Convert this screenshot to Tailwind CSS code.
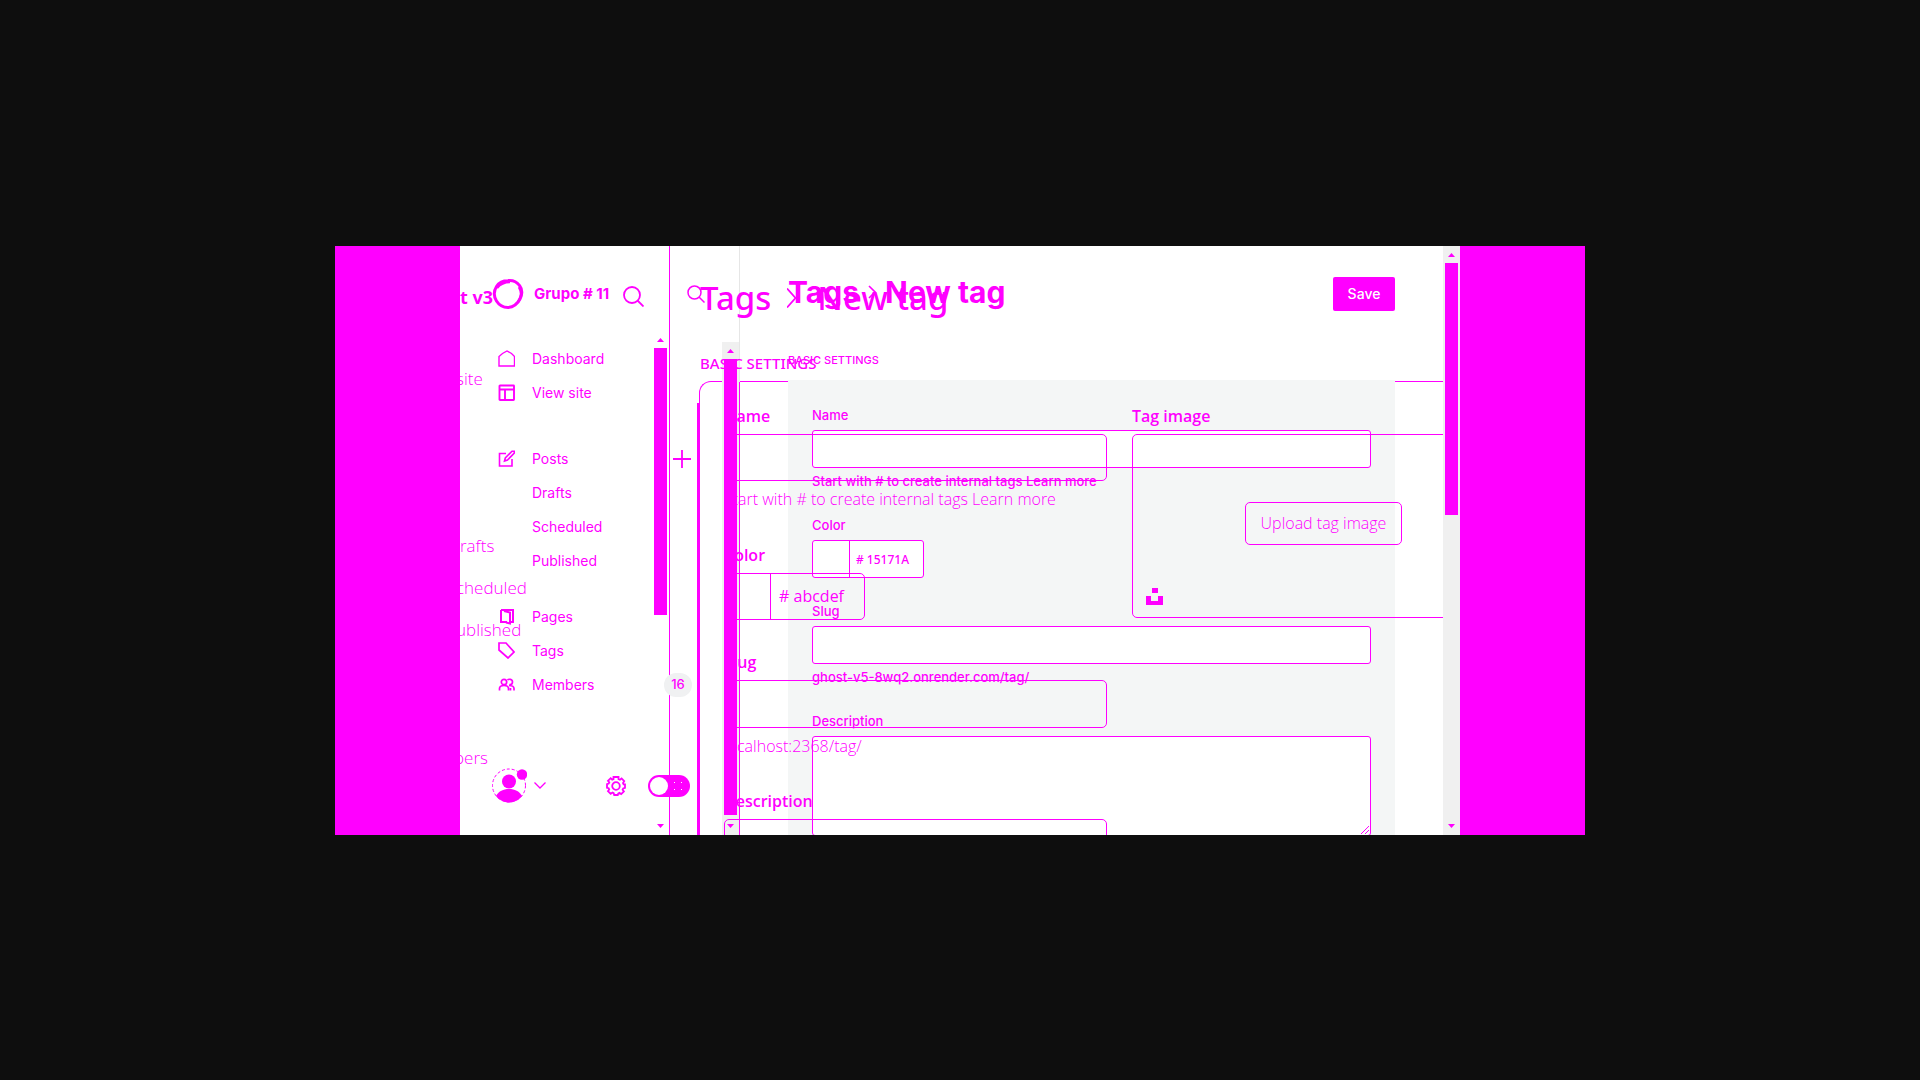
<!DOCTYPE html>
<html lang="en">
<head>
<meta charset="utf-8">
<title>Tags - New tag</title>
<script src="https://cdn.jsdelivr.net/npm/@tailwindcss/browser@4"></script>
</head>
<body class="min-h-screen bg-[#0e0e0e] flex items-center justify-center text-[#f0f]">
<main class="w-full max-w-[1250px] aspect-[1250/589] flex overflow-hidden">
  <div class="w-1/10 shrink-0 bg-[#f0f]"></div>

  <div class="flex-1 min-w-0 bg-white grid grid-cols-[minmax(0,1fr)] grid-rows-[minmax(0,1fr)] overflow-hidden">

    <!-- outlines lying below both versions -->
    <div class="col-start-1 row-start-1 flex overflow-hidden">
      <div class="w-[210px] shrink-0 border-r border-[#f0f]"></div>
      <div class="flex-1 flex pl-[27px] pt-[135px] pr-[17px]">
        <div class="w-[2px] mt-[22px] bg-[#f0f]"></div>
        <div class="flex-1 border-t border-l border-[#f0f] rounded-tl-xl"></div>
      </div>
    </div>

    <!-- current version -->
    <div class="col-start-1 row-start-1 flex min-h-0 overflow-hidden font-['Inter',sans-serif]">
      <aside class="w-[280px] shrink-0 flex">
        <div class="flex-1 flex flex-col text-sm">
          <div class="h-24 flex items-center pl-8 pr-[17px]">
            <svg class="size-8 shrink-0" viewBox="0 0 32 32" fill="none" stroke="currentColor" stroke-width="3"><path d="M16 2.500c5-.5 9 1.500 11.500 5 3 4 2.500 9.500.5 13.500-2.500 5-7 8-12 8.500-5 0-9-2.500-11.500-6.500C1.500 18 2 12.500 4.500 8.500 7 4.500 11 2.500 16 2.500z"/><path stroke-width="2.500" d="M5 10c3-4 8-6 13-6M27 9c3 5 2 11-1 15"/></svg>
            <b class="ml-2.5 flex-1 text-[15px] font-bold">Grupo # 11</b>
            <button aria-label="Search"><svg class="size-[18px]" viewBox="0 0 18 18" fill="none" stroke="currentColor" stroke-width="1.500"><circle cx="7.500" cy="7.500" r="6.500"/><path d="M12 12l5.500 5.500"/></svg></button>
          </div>
          <nav class="flex flex-col pl-[38px] pr-8">
            <a href="#" class="h-[34px] flex items-center gap-[17px]"><svg class="size-[17px]" viewBox="0 0 17 17" fill="none" stroke="currentColor" stroke-width="1.400"><path d="M1 16V6.500l3.500-3L9 1l4.500 2.500 3 3V16z"/></svg>Dashboard</a>
            <a href="#" class="h-[34px] flex items-center gap-[17px]"><svg class="size-[17px]" viewBox="0 0 17 17" fill="none" stroke="currentColor" stroke-width="1.900"><rect x="1.500" y="1.500" width="14.500" height="14.500" rx=".5"/><path d="M1 5.500h15M7 5.500V16"/></svg>View site</a>
            <div class="mt-8 h-[34px] flex items-center"><a href="#" class="flex-1 flex items-center gap-[17px]"><svg class="size-[17px]" viewBox="0 0 17 17" fill="none" stroke="currentColor" stroke-width="1.600"><path d="M8 3.500H1.500V16H14V9"/><path d="M6.500 11l.8-3L14 1.200h2.300V3L9.500 10z"/></svg>Posts</a>
              <button aria-label="New post" class="-mr-px"><svg class="size-[18px]" viewBox="0 0 18 18" stroke="currentColor" stroke-width="1.800"><path d="M9 0v18M0 9h18"/></svg></button></div>
            <a href="#" class="h-[34px] flex items-center pl-[34px]">Drafts</a>
            <a href="#" class="h-[34px] flex items-center pl-[34px]">Scheduled</a>
            <a href="#" class="h-[34px] flex items-center pl-[34px]">Published</a>
            <a href="#" class="mt-[22px] h-[34px] flex items-center gap-[17px]"><svg class="size-[17px]" viewBox="0 0 17 17" fill="none" stroke="currentColor" stroke-width="2"><path d="M3 2h12v12h-2M3 2v12h6"/><path d="M6 3l6 1.500v11L8 14.500"/></svg>Pages</a>
            <a href="#" class="h-[34px] flex items-center gap-[17px]"><svg class="size-[17px]" viewBox="0 0 17 17" fill="none" stroke="currentColor" stroke-width="1.700"><path d="M1 1h7l8 9-6 6L1 8z"/></svg>Tags</a>
            <a href="#" class="h-[34px] flex items-center gap-[17px]"><svg class="size-[17px]" viewBox="0 0 17 17" fill="none" stroke="currentColor" stroke-width="1.700"><circle cx="6" cy="6" r="2.700"/><path d="M1.500 14.500v-2c0-2 2-3 4.500-3s4.500 1 4.500 3v2M9.500 4c1-1.200 5-1 5 2 0 2-1.500 2.700-3 2.700M11 9.500c3 0 5 1 5 3v2M12.500 12v2.500"/></svg><span class="flex-1">Members</span><span class="-mr-0.5 w-7 h-6 rounded-full bg-[#f0f1f2] flex items-center justify-center text-[13px] font-medium">16</span></a>
          </nav>
          <div class="mt-auto h-[98px] flex items-center pl-8 pr-8">
            <button aria-label="Account" class="flex items-center gap-[7px]">
              <svg class="w-[35px] h-[35px]" viewBox="0 0 35 35"><circle cx="17" cy="17.500" r="16.500" fill="none" stroke="currentColor" stroke-dasharray="3 2"/><circle cx="17" cy="13.500" r="7" fill="currentColor"/><path d="M4 28c3-5 7-7 13-7s10 2 13 7c-3 4-8 6.500-13 6.500S7 32 4 28z" fill="currentColor"/><circle cx="30" cy="6.500" r="5.200" fill="currentColor"/></svg>
              <svg class="w-3 h-[7px]" viewBox="0 0 12 7" fill="none" stroke="currentColor" stroke-width="1.300"><path d="M.5.5L6 6l5.500-5.500"/></svg>
            </button>
            <button aria-label="Settings" class="ml-auto"><svg class="size-5" viewBox="0 0 20 20" fill="none" stroke="currentColor" stroke-width="1.800"><circle cx="10" cy="10" r="3.800"/><path d="M7.500 1h5v2.200l1.500.6 1.600-1.400 2.600 2.800-1.200 1.800.6 1.300H19v3.600l-1.800.6-.6 1.200 1.300 1.800-2.700 2.600-1.800-1.200-1.200.7L11.800 19H8.200l-.5-1.800-1.200-.6-1.800 1.200L2 15.200l1.200-1.700-.6-1.300L1 11.800V8.200l1.700-.6.600-1.200L2 4.900l2.700-2.700L6.200 3.600l1.300-.5z"/></svg></button>
            <button role="switch" aria-checked="false" aria-label="Night shift" class="ml-[22px]"><svg class="w-[42px] h-[22px]" viewBox="0 0 42 22"><rect width="42" height="22" rx="11" fill="currentColor"/><circle cx="11" cy="11" r="9" fill="#fff"/><g fill="#fff"><path d="M26 7h1v1h-1zM33 7h1v1h-1zM26 14h1v1h-1zM33 14h1v1h-1z"/></g></svg></button>
          </div>
        </div>
        <div class="mt-24 w-[17px] bg-[#f0f0f0] flex flex-col items-center">
          <svg class="w-[7px] h-[17px] shrink-0" viewBox="0 0 7 17" fill="currentColor"><path d="M0 11l3.500-4L7 11z"/></svg>
          <div class="flex-1 w-[13px] bg-[#f0f]"></div>
          <svg class="mt-[3px] w-[7px] h-[17px] shrink-0" viewBox="0 0 7 17" fill="currentColor"><path d="M0 6l3.500 4L7 6z"/></svg>
        </div>
        <div class="w-px flex flex-col"><div class="h-[136px] bg-[#e6e6e6]"></div><div class="flex-1 bg-[#f0f]"></div></div>
      </aside>

      <section class="flex-1 min-w-0 px-12">
        <header class="h-24 flex items-center">
          <h1 class="pb-[3px] flex items-center gap-[9px] text-[30px] leading-9 font-bold">Tags<svg class="w-2 h-[14px]" viewBox="0 0 8 14" fill="none" stroke="currentColor" stroke-width="1.600"><path d="M1 1l6 6-6 6"/></svg>New tag</h1>
          <button class="ml-auto w-[62px] h-[34px] rounded-[2px] bg-[#f0f] text-white text-sm font-medium">Save</button>
        </header>
        <h2 class="h-[38px] flex items-center text-[11px] font-medium">BASIC SETTINGS</h2>
        <form class="bg-[#f4f6f6] px-6 pt-[25px] h-[520px] text-[13px] leading-5 font-medium">
          <label for="name" class="block">Name</label>
          <input id="name" class="mt-[5px] block w-full h-[38px] bg-white border border-[#f0f] rounded-[3px] px-2">
          <p class="mt-[3px]">Start with # to create internal tags <a href="#">Learn more</a></p>
          <label for="color" class="mt-6 block">Color</label>
          <div class="mt-[5px] w-28 h-[38px] flex bg-white border border-[#f0f] rounded-[3px]">
            <div class="w-9 shrink-0"></div>
            <input id="color" value="# 15171A" class="min-w-0 flex-1 border-l border-[#f0f] px-1.5 pt-0.5 text-[12px] font-['Noto_Sans',sans-serif]">
          </div>
          <label for="slug" class="mt-[23px] block">Slug</label>
          <input id="slug" class="mt-[5px] block w-full h-[38px] bg-white border border-[#f0f] rounded-[3px] px-2">
          <p class="mt-[3px]">ghost-v5-8wq2.onrender.com/tag/</p>
          <label for="desc" class="mt-6 block">Description</label>
          <div class="mt-[5px] relative">
            <textarea id="desc" class="block w-full h-[100px] resize-none bg-white border border-[#f0f] rounded-[3px] px-2"></textarea>
            <svg class="absolute right-0.5 bottom-0.5 w-2 h-2" viewBox="0 0 8 8" stroke="currentColor"><path d="M0 8l8-8M4 8l4-4"/></svg>
          </div>
        </form>
      </section>

      <div class="w-[17px] bg-[#f0f0f0] flex flex-col items-center">
        <svg class="w-[7px] h-[17px] shrink-0" viewBox="0 0 7 17" fill="currentColor"><path d="M0 11l3.500-4L7 11z"/></svg>
        <div class="h-[252px] w-[13px] bg-[#f0f]"></div>
        <svg class="mt-auto w-[7px] h-[17px] shrink-0" viewBox="0 0 7 17" fill="currentColor"><path d="M0 6l3.500 4L7 6z"/></svg>
      </div>
    </div>

    <!-- earlier version, laid over the current one -->
    <div class="z-10 col-start-1 row-start-1 flex min-h-0 overflow-hidden pointer-events-none font-['Open_Sans',sans-serif] text-base leading-5">
      <aside class="w-[210px] shrink-0 flex">
        <div class="flex-1 flex flex-col text-[17px] font-light">
          <div class="h-[102px] flex items-center"><b class="flex-1 font-bold text-[18px]">t v3</b></div>
          <div class="mt-2.5 h-[42px] flex items-center"><span class="-ml-1">site</span></div>
          <div class="mt-[125px] h-[42px] flex items-center">rafts</div>
          <div class="h-[42px] flex items-center"><span class="-ml-1">cheduled</span></div>
          <div class="h-[42px] flex items-center"><span class="-ml-1">ublished</span></div>
          <div class="mt-[86px] h-[42px] flex items-center"><span class="-ml-1.5">bers</span></div>
        </div>
        <div class="w-[46px] flex flex-col items-end pr-px">
          <svg class="mt-10 mr-[25px] size-[21px] shrink-0" viewBox="0 0 21 21" fill="none" stroke="currentColor" stroke-width="1.800"><circle cx="9" cy="9" r="8"/><path d="M14.500 14.500l6 6"/></svg>
          <div class="mt-6 flex-1 w-[17px] flex flex-col items-center">
            <svg class="w-[7px] h-[17px] shrink-0" viewBox="0 0 7 17" fill="currentColor"><path d="M0 11l3.500-4L7 11z"/></svg>
            <div class="h-[267px] w-[13px] bg-[#f0f]"></div>
            <svg class="mt-auto w-[7px] h-[17px] shrink-0" viewBox="0 0 7 17" fill="currentColor"><path d="M0 6l3.500 4L7 6z"/></svg>
          </div>
        </div>
      </aside>
      <section class="flex-1 min-w-0 mr-[17px] pl-[30px] overflow-hidden">
        <h1 class="h-[104px] flex items-center text-[33px] leading-10 font-medium font-['Noto_Sans',sans-serif]">Tags<svg class="ml-4 mr-5 w-[10px] h-5" viewBox="0 0 10 20" fill="none" stroke="currentColor" stroke-width="1.800"><path d="M0 .5L8.500 10 0 19.500"/></svg>New tag</h1>
        <h2 class="h-[26px] flex items-center text-[15px] font-medium font-['Noto_Sans',sans-serif]">BASIC SETTINGS</h2>
        <form class="pt-[30px] pl-6 flex gap-[25px]">
          <div class="w-[383px] shrink-0 font-light">
            <label for="name2" class="block font-semibold">Name</label>
            <input id="name2" class="mt-2 block w-full h-[47px] border border-[#f0f] rounded-[5px] px-3">
            <p class="mt-2">Start with # to create internal tags <a href="#">Learn more</a></p>
            <label for="color2" class="mt-9 block font-semibold">Color</label>
            <div class="mt-2 w-[141px] h-[47px] flex border border-[#f0f] rounded-[5px]">
              <div class="w-[45px] shrink-0"></div>
              <input id="color2" value="# abcdef" class="min-w-0 flex-1 border-l border-[#f0f] px-2 font-normal">
            </div>
            <label for="slug2" class="mt-8 block font-semibold">Slug</label>
            <input id="slug2" class="mt-2 block w-full h-12 border border-[#f0f] rounded-[5px] px-3">
            <p class="mt-2">localhost:2368/tag/</p>
            <label for="desc2" class="mt-[35px] block font-semibold">Description</label>
            <textarea id="desc2" class="mt-2 block w-full h-[100px] resize-none border border-[#f0f] rounded-[5px]"></textarea>
          </div>
          <div class="w-[383px] shrink-0 font-light">
            <h3 class="font-semibold">Tag image</h3>
            <div class="mt-2 h-[184px] border border-[#f0f] rounded-[5px] flex flex-col items-center">
              <button type="button" class="mt-[67px] h-[43px] w-[157px] border border-[#f0f] rounded-[5px]">Upload tag image</button>
              <svg class="mt-auto mb-3 ml-[13px] self-start size-[17px]" viewBox="0 0 17 17" fill="currentColor"><path d="M6 0h6v5H6zM0 8h5v5h7V8h5v9H0z"/></svg>
            </div>
          </div>
        </form>
      </section>
    </div>
  </div>

  <div class="w-1/10 shrink-0 bg-[#f0f]"></div>
</main>
</body>
</html>
